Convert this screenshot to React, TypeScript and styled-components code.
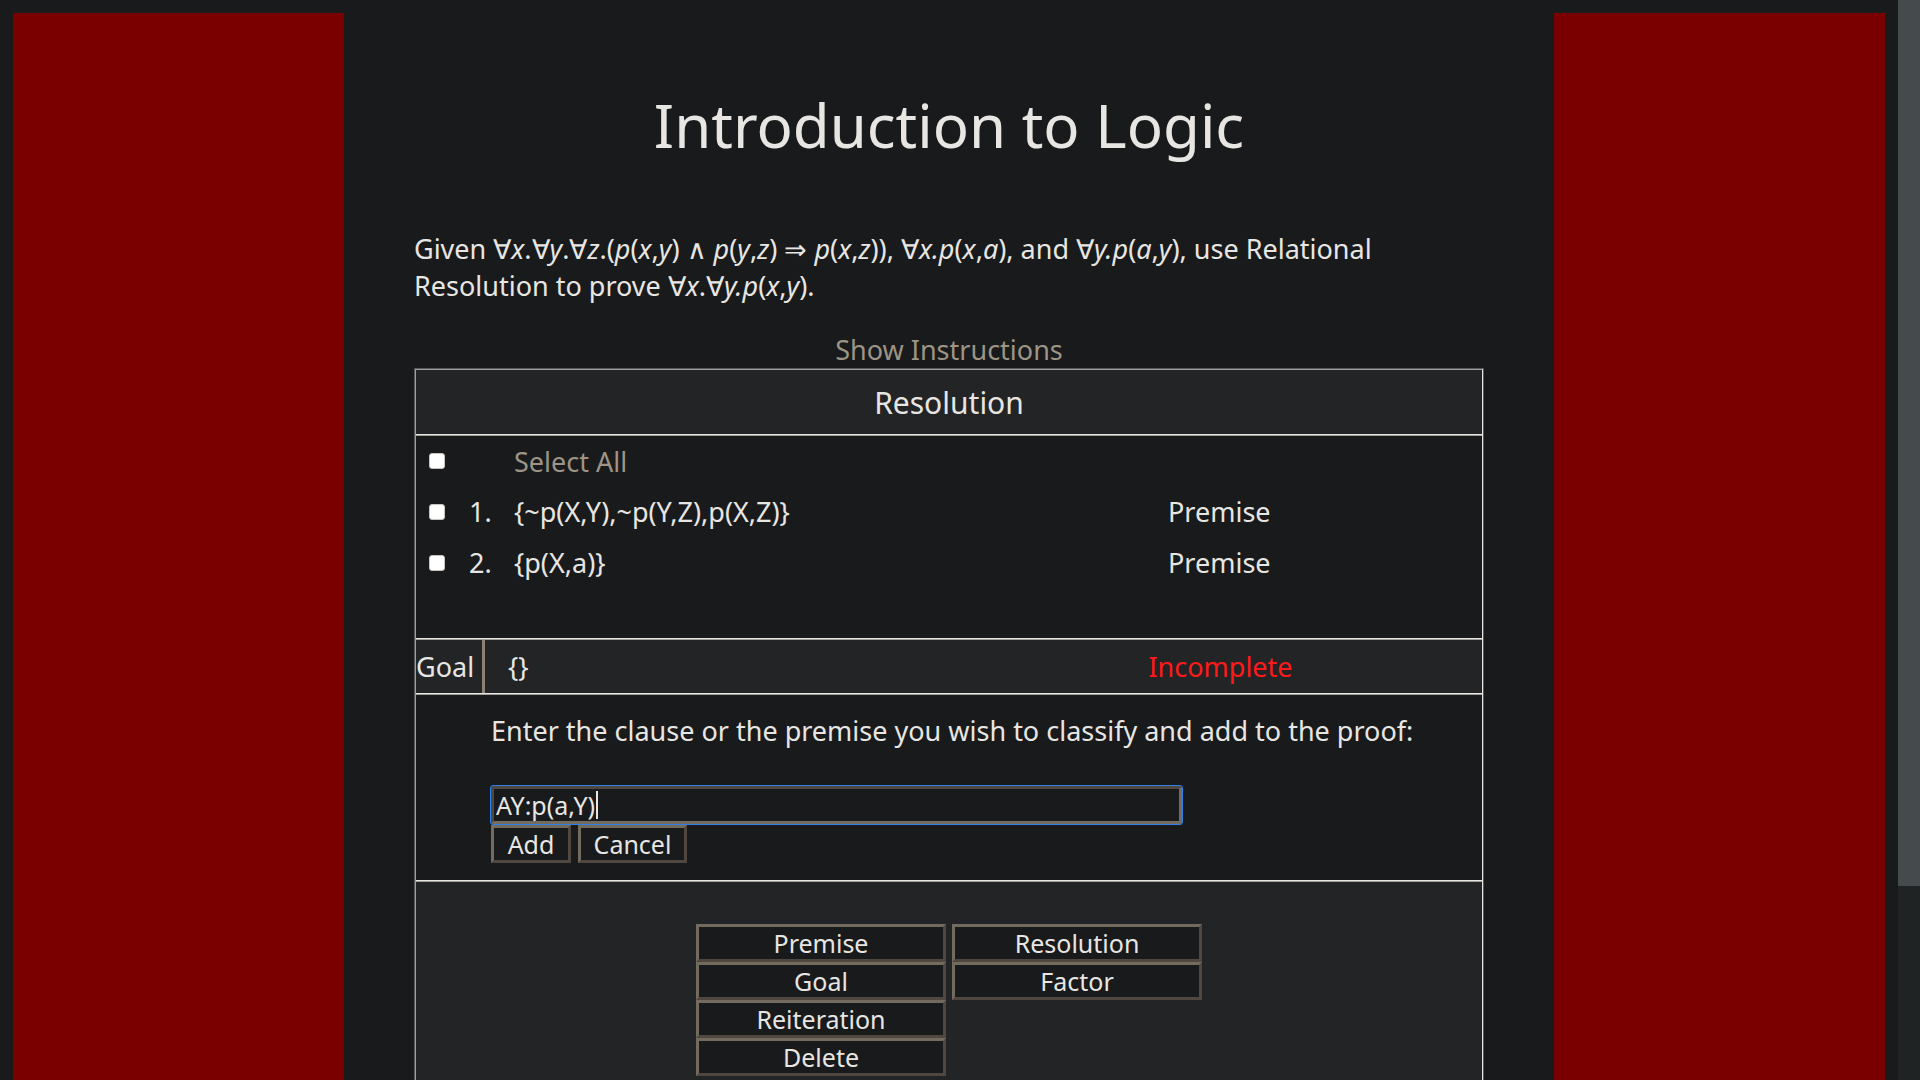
import React, { useState } from "react";
import styled, { createGlobalStyle } from "styled-components";

const color = {
  page: "#181a1b",
  panel: "#222426",
  band: "#7a0000",
  text: "#e8e6e3",
  muted: "#9d9485",
  ruleDim: "#a09f9c",
  frameDim: "#53595c",
  raised: "#736b5e",
  sunken: "#4f4740",
  red: "#ff1a1a",
  focus: "#2f80e8",
};

const GlobalStyle = createGlobalStyle`
  * { box-sizing: border-box; }
  body {
    margin: 0;
    background: ${color.page};
    color: ${color.text};
    font-family: "Noto Sans", sans-serif;
    font-size: 27px;
    line-height: 37px;
  }
`;

const Viewport = styled.div`
  display: flex;
  height: 100vh;
`;

const Scroller = styled.div`
  flex: 1;
  min-width: 0;
  overflow-y: auto;
  scrollbar-width: none;
  padding: 13px;
`;

const ScrollTrack = styled.div`
  flex: none;
  width: 22px;
  background: #202324;
`;

const ScrollThumb = styled.div`
  height: 82%;
  background: #454a4d;
`;

const Bands = styled.div`
  display: grid;
  grid-template-columns: minmax(0, 1fr) minmax(0, 1210px) minmax(0, 1fr);
`;

const Band = styled.div`
  background: ${color.band};
`;

const Main = styled.main`
  padding: 71px 70px 120px;
`;

const Title = styled.h1`
  margin: 0 0 64px;
  font-size: 60px;
  line-height: 82px;
  font-weight: 400;
  text-align: center;
`;

const Problem = styled.p`
  margin: 0 0 27px;
`;

const Instructions = styled.div`
  text-align: center;
`;

const QuietLink = styled.a`
  color: ${color.muted};
  text-decoration: none;
`;

const Frame = styled.section`
  border: 1px solid ${color.frameDim};
`;

const FrameInner = styled.div`
  border: 1px solid ${color.ruleDim};
  border-right-color: ${color.text};
`;

const Section = styled.div<{ $panel?: boolean }>`
  background: ${(p) => (p.$panel ? color.panel : color.page)};
`;

const Rule = styled.hr`
  margin: 0;
  border: 0;
  border-top: 1px solid ${color.text};
  border-bottom: 1px solid ${color.ruleDim};
`;

const Heading = styled.h2`
  margin: 0;
  padding: 13px 0 11px;
  font-size: 30px;
  line-height: 40px;
  font-weight: 400;
  text-align: center;
`;

const Steps = styled.table`
  width: 100%;
  table-layout: fixed;
  border-collapse: collapse;
  margin-bottom: 50px;
`;

const TickColumn = styled.col`
  width: 41px;
`;

const NumberColumn = styled.col`
  width: 45px;
`;

const ReasonColumn = styled.col`
  width: 326px;
`;

const Cell = styled.td`
  height: 51px;
  padding: 0 12px;
  vertical-align: middle;

  thead & {
    height: 50px;
  }

  &:first-child {
    padding-left: 13px;
  }
`;

const Tick = styled.input`
  appearance: none;
  display: block;
  width: 16px;
  height: 16px;
  margin: 0;
  border: 1px solid #c8c3bc;
  border-radius: 3px;
  background: #fff;
  &:checked {
    background: ${color.focus};
  }
`;

const GoalRow = styled.div`
  display: grid;
  grid-template-columns: 69px minmax(0, 1fr) 523px;
  align-items: center;
  height: 53px;
`;

const GoalName = styled.div`
  align-self: stretch;
  display: flex;
  align-items: center;
  border-right: 3px solid #8c8273;
`;

const GoalClause = styled.div`
  padding-left: 23px;
`;

const Status = styled.div`
  color: ${color.red};
  text-align: center;
`;

const Entry = styled.form`
  display: flex;
  flex-direction: column;
  align-items: flex-start;
  padding: 17px 50px 17px 75px;
`;

const EntryLabel = styled.label`
  margin-bottom: 37px;
`;

const EntryBox = styled.div`
  position: relative;
  width: 691px;
  max-width: 100%;
  margin-bottom: 1px;
`;

const EntryInput = styled.input`
  display: block;
  width: 100%;
  height: 38px;
  padding: 0 2px;
  border: 3px solid;
  border-color: ${color.sunken} ${color.raised} ${color.raised} ${color.sunken};
  border-radius: 2px;
  outline: 1px solid ${color.focus};
  background: ${color.page};
  color: ${color.text};
  caret-color: transparent;
  font-family: inherit;
  font-size: 25px;
  line-height: 32px;
`;

const Caret = styled.span`
  position: absolute;
  top: 5px;
  left: 105px;
  width: 2px;
  height: 28px;
  background: ${color.text};
  pointer-events: none;
`;

const EntryButtons = styled.div`
  display: flex;
  gap: 7px;
`;

const Button = styled.button<{ $width: number }>`
  width: ${(p) => p.$width}px;
  height: 38px;
  padding: 0;
  border: 3px solid;
  border-color: ${color.raised} ${color.sunken} ${color.sunken} ${color.raised};
  background: ${color.page};
  color: ${color.text};
  font-family: inherit;
  font-size: 25px;
  line-height: 32px;
`;

const Operations = styled.div`
  display: flex;
  justify-content: center;
  align-items: flex-start;
  gap: 6px;
  padding: 42px 0 44px;
`;

const OperationColumn = styled.div`
  display: flex;
  flex-direction: column;
`;

const steps = [
  { clause: "{~p(X,Y),~p(Y,Z),p(X,Z)}", reason: "Premise" },
  { clause: "{p(X,a)}", reason: "Premise" },
];

const operations = [
  ["Premise", "Goal", "Reiteration", "Delete"],
  ["Resolution", "Factor"],
];

export default function App() {
  const [clause, setClause] = useState("AY:p(a,Y)");
  return (
    <>
      <GlobalStyle />
      <Viewport>
        <Scroller>
          <Bands>
            <Band />
            <Main>
              <Title>Introduction to Logic</Title>
              <Problem>
                Given ∀<i>x</i>.∀<i>y</i>.∀<i>z</i>.(<i>p</i>(<i>x</i>,<i>y</i>) ∧ <i>p</i>(<i>y</i>,<i>z</i>) ⇒{" "}
                <i>p</i>(<i>x</i>,<i>z</i>)), ∀<i>x.p</i>(<i>x</i>,<i>a</i>), and ∀<i>y.p</i>(<i>a</i>,<i>y</i>), use
                Relational Resolution to prove ∀<i>x</i>.∀<i>y.p</i>(<i>x</i>,<i>y</i>).
              </Problem>
              <Instructions>
                <QuietLink href="#instructions">Show Instructions</QuietLink>
              </Instructions>
              <Frame>
                <FrameInner>
                  <Section $panel>
                    <Heading>Resolution</Heading>
                  </Section>
                  <Rule />
                  <Section>
                    <Steps>
                      <colgroup>
                        <TickColumn />
                        <NumberColumn />
                        <col />
                        <ReasonColumn />
                      </colgroup>
                      <thead>
                        <tr>
                          <Cell>
                            <Tick type="checkbox" aria-label="Select All" />
                          </Cell>
                          <Cell />
                          <Cell>
                            <QuietLink href="#all">Select All</QuietLink>
                          </Cell>
                          <Cell />
                        </tr>
                      </thead>
                      <tbody>
                        {steps.map((step, i) => (
                          <tr key={step.clause}>
                            <Cell>
                              <Tick type="checkbox" aria-label={`Step ${i + 1}`} />
                            </Cell>
                            <Cell>{i + 1}.</Cell>
                            <Cell>{step.clause}</Cell>
                            <Cell>{step.reason}</Cell>
                          </tr>
                        ))}
                      </tbody>
                    </Steps>
                  </Section>
                  <Rule />
                  <Section $panel>
                    <GoalRow>
                      <GoalName>Goal</GoalName>
                      <GoalClause>{"{}"}</GoalClause>
                      <Status>Incomplete</Status>
                    </GoalRow>
                  </Section>
                  <Rule />
                  <Section>
                    <Entry onSubmit={(e) => e.preventDefault()}>
                      <EntryLabel htmlFor="clause">
                        Enter the clause or the premise you wish to classify and add to the proof:
                      </EntryLabel>
                      <EntryBox>
                        <EntryInput id="clause" value={clause} onChange={(e) => setClause(e.target.value)} />
                        <Caret />
                      </EntryBox>
                      <EntryButtons>
                        <Button $width={80}>Add</Button>
                        <Button $width={109} type="button">
                          Cancel
                        </Button>
                      </EntryButtons>
                    </Entry>
                  </Section>
                  <Rule />
                  <Section $panel>
                    <Operations>
                      {operations.map((column) => (
                        <OperationColumn key={column[0]}>
                          {column.map((name) => (
                            <Button key={name} $width={250}>
                              {name}
                            </Button>
                          ))}
                        </OperationColumn>
                      ))}
                    </Operations>
                  </Section>
                </FrameInner>
              </Frame>
            </Main>
            <Band />
          </Bands>
        </Scroller>
        <ScrollTrack>
          <ScrollThumb />
        </ScrollTrack>
      </Viewport>
    </>
  );
}
